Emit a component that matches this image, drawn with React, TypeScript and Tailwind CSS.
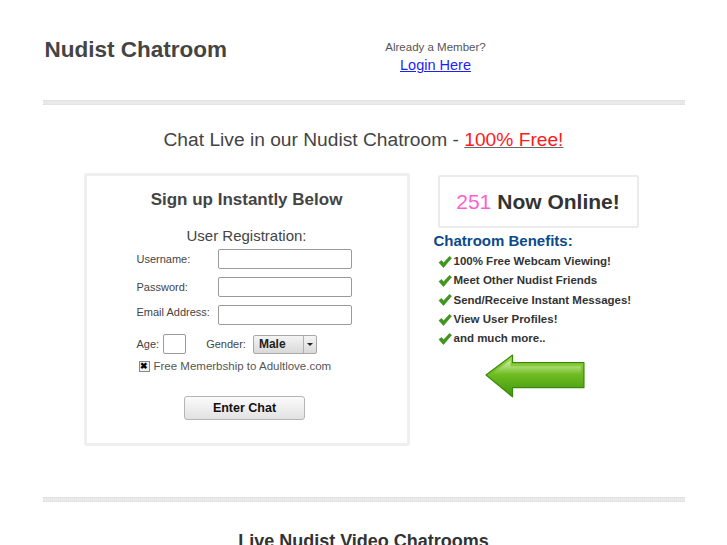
import React from 'react';

const benefits = [
  '100% Free Webcam Viewing!',
  'Meet Other Nudist Friends',
  'Send/Receive Instant Messages!',
  'View User Profiles!',
  'and much more..',
];

function Check() {
  return (
    <svg width="14" height="12" viewBox="0 0 14 12" className="shrink-0">
      <path d="M1 6.5 L3.5 4.5 L5.5 7 L11.5 0.5 L13.5 2 L5.5 11.5 Z" fill="#3d9a18" stroke="#2f7f10" strokeWidth="0.6" strokeLinejoin="round" />
    </svg>
  );
}

function Arrow() {
  return (
    <svg width="102" height="47" viewBox="0 0 100 44" className="block">
      <defs>
        <linearGradient id="ag" x1="0" y1="0" x2="0" y2="1">
          <stop offset="0" stopColor="#a3dc4e" />
          <stop offset="0.45" stopColor="#6fbd22" />
          <stop offset="1" stopColor="#3f960b" />
        </linearGradient>
        <linearGradient id="hl" x1="0" y1="0" x2="0" y2="1">
          <stop offset="0" stopColor="#ffffff" stopOpacity="0.55" />
          <stop offset="1" stopColor="#ffffff" stopOpacity="0" />
        </linearGradient>
      </defs>
      <path d="M1 20.5 L27 1 L27 8.5 L97 8.5 L97 33 L27 33 L27 42 Z" fill="url(#ag)" stroke="#3a8a0a" strokeWidth="1.2" strokeLinejoin="round" />
      <path d="M6 20 L25 6 L25 12 L94 12 L94 20 Z" fill="url(#hl)" />
    </svg>
  );
}

function Divider() {
  return (
    <div className="h-[5px] bg-[#e9e9e9] border-y border-dotted border-[#dcdcdc]" />
  );
}

export default function App() {
  return (
    <div className="min-h-screen bg-white font-['Liberation_Sans',Arial,sans-serif]">
      <div className="w-[642px] mx-auto">
        {/* Header */}
        <div className="flex h-[100px] pt-[37px]">
          <h1 className="ml-[2px] w-[339px] text-[22.5px] leading-[26px] font-bold text-[#444]">
            Nudist Chatroom
          </h1>
          <div className="flex flex-col items-center w-[104px] pt-[3px]">
            <span className="text-[11.5px] leading-[14px] text-[#555]">Already a Member?</span>
            <a href="#" className="mt-[3px] text-[14.5px] leading-[17px] text-[#1e1eff] underline">
              Login Here
            </a>
          </div>
        </div>
        <Divider />

        <p className="mt-[21px] text-center text-[19.2px] leading-[28px] text-[#444]">
          Chat Live in our Nudist Chatroom -{' '}
          <a href="#" className="text-[#ff1a1a] underline decoration-[#666]">100% Free!</a>
        </p>

        {/* Main */}
        <div className="flex mt-[19px]">
          <div className="ml-[41px] w-[326px] h-[273px] border-[3px] border-[#efefef] rounded-[2px] flex flex-col">
            <h2 className="mt-[14px] text-center text-[17px] leading-[20px] font-bold text-[#444]">
              Sign up Instantly Below
            </h2>
            <p className="mt-[17px] text-center text-[15px] leading-[18px] text-[#444]">User Registration:</p>

            <div className="pl-[50px] mt-[4px] flex items-center">
              <span className="w-[81px] text-[11px] text-[#444]">Username:</span>
              <input className="w-[134px] h-[20px] border border-[#9a9a9a] rounded-[2px]" />
            </div>
            <div className="pl-[50px] mt-[8px] flex items-center">
              <span className="w-[81px] text-[11px] text-[#444]">Password:</span>
              <input type="password" className="w-[134px] h-[20px] border border-[#9a9a9a] rounded-[2px]" />
            </div>
            <div className="pl-[50px] mt-[8px] flex items-start">
              <span className="w-[81px] text-[11px] leading-[14px] text-[#444]">Email Address:</span>
              <input className="w-[134px] h-[20px] border border-[#9a9a9a] rounded-[2px]" />
            </div>

            <div className="pl-[50px] mt-[9px] flex items-center text-[11px] text-[#444]">
              <span>Age:</span>
              <input className="ml-[4px] w-[23px] h-[20px] border border-[#9a9a9a] rounded-[2px]" />
              <span className="ml-[20px]">Gender:</span>
              <div className="ml-[7px] w-[64px] h-[19px] flex border border-[#a8a8a8] rounded-[2px] bg-gradient-to-b from-[#f4f4f4] to-[#d9d9d9]">
                <span className="flex-1 pl-[5px] text-[12px] leading-[17px] font-bold text-[#222]">Male</span>
                <span className="w-[13px] border-l border-[#b0b0b0] flex items-center justify-center">
                  <span className="w-0 h-0 border-x-[3px] border-x-transparent border-t-[3px] border-t-[#222]" />
                </span>
              </div>
            </div>

            <div className="pl-[52px] mt-[5px] flex items-center text-[11.5px] leading-[14px] text-[#555]">
              <span className="w-[11px] h-[11px] border border-[#888] bg-[#f2f2f2] flex items-center justify-center text-[9px] leading-none font-bold text-black">
                ✖
              </span>
              <span className="ml-[4px]">Free Memerbship to Adultlove.com</span>
            </div>

            <button className="mt-[23px] self-center -ml-[4px] w-[121px] h-[24px] border border-[#b5b5b5] rounded-[3px] bg-gradient-to-b from-[#fbfbfb] to-[#e2e2e2] text-[12.5px] font-bold text-[#111]">
              Enter Chat
            </button>
          </div>

          <div className="ml-[24px] flex flex-col">
            <div className="mt-[2px] ml-[4px] w-[201px] h-[53px] border-2 border-[#ebebeb] rounded-[2px] flex items-center justify-center text-[21px]">
              <span className="text-[#ff5fcf]">251</span>
              <span className="ml-[6px] font-bold text-[#333]">Now Online!</span>
            </div>
            <h3 className="mt-[4px] text-[15px] leading-[18px] font-bold text-[#0c4a8c]">Chatroom Benefits:</h3>
            <ul className="mt-[2px] ml-[4px]">
              {benefits.map((b) => (
                <li key={b} className="flex items-center h-[19.3px] text-[11.5px] font-bold text-[#333]">
                  <Check />
                  <span className="ml-[2px]">{b}</span>
                </li>
              ))}
            </ul>
            <div className="mt-[5px] ml-[51px]">
              <Arrow />
            </div>
          </div>
        </div>

        <div className="mt-[51px]">
          <Divider />
        </div>

        <h2 className="mt-[28px] text-center text-[18px] leading-[22px] font-bold text-[#333]">
          Live Nudist Video Chatrooms
        </h2>
      </div>
    </div>
  );
}
